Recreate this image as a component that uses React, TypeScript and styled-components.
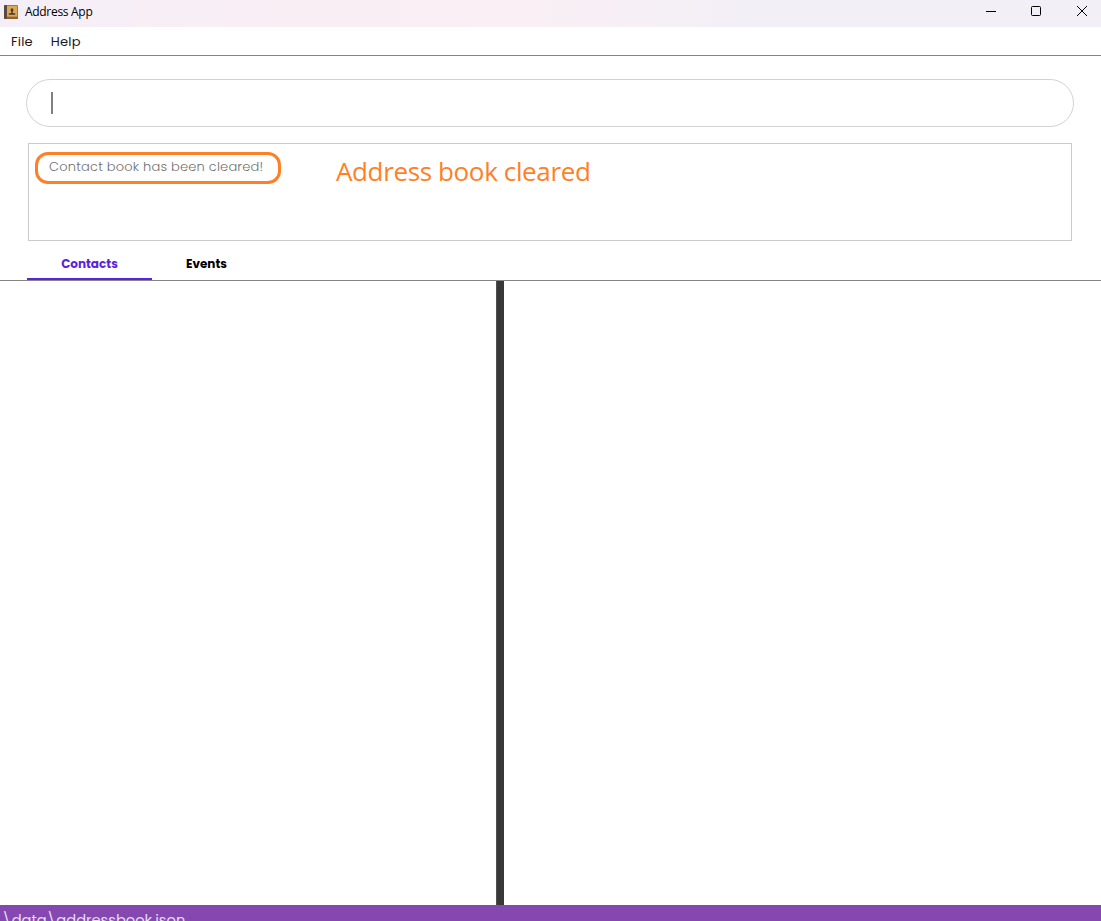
import React from "react";
import styled, { createGlobalStyle } from "styled-components";

const GlobalStyle = createGlobalStyle`
  * { box-sizing: border-box; }
  body { margin: 0; background: #fff; overflow: hidden; }
`;

const geometric = `"Poppins", "Inter", "Open Sans", sans-serif`;
const system = `"Segoe UI", "Open Sans", "Noto Sans", sans-serif`;

const Window = styled.div`
  display: flex;
  flex-direction: column;
  width: 1101px;
  height: 921px;
  overflow: hidden;
  background: #fff;
  font-family: ${geometric};
`;

const TitleBar = styled.header`
  display: flex;
  flex: none;
  align-items: center;
  height: 27px;
  padding: 0 13px 3px 4px;
  background: linear-gradient(90deg, #f4eff7 0%, #faeef5 25%, #faeff5 45%, #f3eff7 70%, #f2eff7 100%);
`;

const Title = styled.span`
  flex: 1;
  margin-left: 7px;
  font: 12px/16px ${system};
  letter-spacing: -0.3px;
  color: #000;
`;

const WindowButtons = styled.div`
  display: flex;
  gap: 34px;
  margin-top: -3px;

  svg { display: block; }
`;

const MenuBar = styled.nav`
  display: flex;
  flex: none;
  align-items: center;
  gap: 18px;
  height: 29px;
  padding: 2px 0 0 11px;
  border-bottom: 1px solid #858585;
`;

const MenuItem = styled.span`
  font-size: 13px;
  line-height: 20px;
  letter-spacing: 0.2px;
  color: #1a1a1a;
`;

const CommandBox = styled.div`
  display: flex;
  flex: none;
  align-items: center;
  height: 48px;
  margin: 23px 27px 0 26px;
  padding-left: 24px;
  border: 1px solid #d3d3d3;
  border-radius: 24px;
`;

const Caret = styled.span`
  width: 2px;
  height: 22px;
  background: #808080;
`;

const ResultBox = styled.section`
  display: flex;
  flex: none;
  align-items: flex-start;
  height: 98px;
  margin: 16px 29px 0 28px;
  padding: 8px 0 0 6px;
  border: 1px solid #cbcbcb;
`;

const Highlight = styled.div`
  width: 246px;
  height: 32px;
  padding-left: 11px;
  border: 3px solid #ff7f27;
  border-radius: 13px;
  font-size: 13px;
  font-weight: 300;
  line-height: 23px;
  letter-spacing: 0.2px;
  white-space: nowrap;
  color: #707070;
`;

const Annotation = styled.div`
  margin: 1px 0 0 55px;
  font: 26px/36px ${system};
  letter-spacing: -0.37px;
  white-space: nowrap;
  color: #ff7f27;
`;

const Tabs = styled.div`
  display: flex;
  flex: none;
  height: 40px;
  padding-left: 27px;
  border-bottom: 1px solid #858585;
`;

const Tab = styled.div<{ $active?: boolean; $width: number }>`
  width: ${(p) => p.$width}px;
  border-bottom: 2px solid ${(p) => (p.$active ? "#5c23dc" : "transparent")};
  font-size: 12px;
  font-weight: 700;
  line-height: 46px;
  text-align: center;
  color: ${(p) => (p.$active ? "#5c23dc" : "#000")};
`;

const Split = styled.main`
  display: flex;
  flex: none;
  height: 624px;
`;

const Pane = styled.div<{ $width: number }>`
  width: ${(p) => p.$width}px;
`;

const Divider = styled.div`
  width: 8px;
  background: #383838;
  border-left: 1px solid #505050;
`;

const StatusBar = styled.footer`
  flex: none;
  height: 16px;
  padding-left: 2px;
  overflow: hidden;
  background: #8548b0;
  font-size: 14.67px;
  line-height: 30px;
  color: #eadcf3;
`;

const BookIcon = () => (
  <svg width="14" height="14" viewBox="0 0 14 14">
    <rect width="14" height="14" rx="1" fill="#a8763d" />
    <rect width="3" height="14" rx="1" fill="#5b4a40" />
    <rect x="3" y="1" width="10" height="10.500" fill="#dba955" />
    <ellipse cx="8" cy="5" rx="1.400" ry="1.700" fill="#4c3a28" />
    <path d="M7.300 6h1.400v2l2.600.5v1.200H4.700V8.500l2.600-.5z" fill="#4c3a28" />
    <path d="M3 13h11" stroke="#8b5d31" strokeWidth="1.500" />
  </svg>
);

export default function App() {
  return (
    <Window>
      <GlobalStyle />
      <TitleBar>
        <BookIcon />
        <Title>Address App</Title>
        <WindowButtons>
          <svg width="12" height="12" viewBox="0 0 12 12" fill="none" stroke="#000">
            <path d="M2 6.500h10" />
          </svg>
          <svg width="12" height="12" viewBox="0 0 12 12" fill="none" stroke="#000">
            <rect x="1.500" y="1.500" width="9" height="9" rx="1" />
          </svg>
          <svg width="12" height="12" viewBox="0 0 12 12" fill="none" stroke="#000">
            <path d="M1 1l10 10M11 1L1 11" />
          </svg>
        </WindowButtons>
      </TitleBar>
      <MenuBar>
        <MenuItem>File</MenuItem>
        <MenuItem>Help</MenuItem>
      </MenuBar>
      <CommandBox>
        <Caret />
      </CommandBox>
      <ResultBox>
        <Highlight>Contact book has been cleared!</Highlight>
        <Annotation>Address book cleared</Annotation>
      </ResultBox>
      <Tabs>
        <Tab $active $width={125}>Contacts</Tab>
        <Tab $width={109}>Events</Tab>
      </Tabs>
      <Split>
        <Pane $width={496} />
        <Divider />
        <Pane $width={597} />
      </Split>
      <StatusBar>\data\addressbook.json</StatusBar>
    </Window>
  );
}
